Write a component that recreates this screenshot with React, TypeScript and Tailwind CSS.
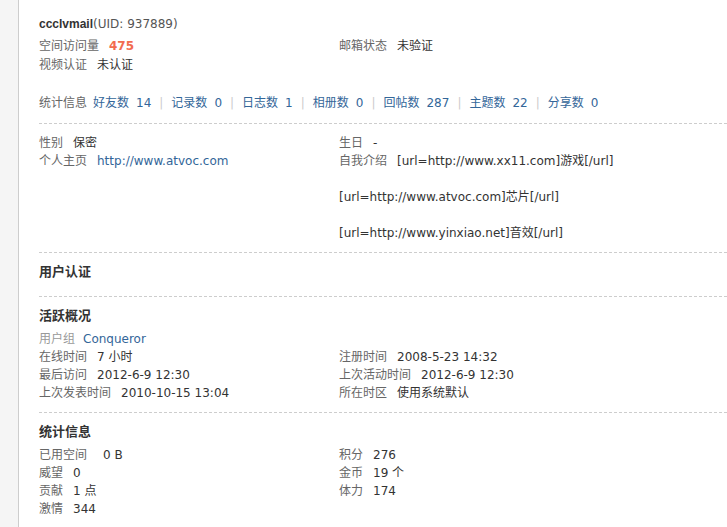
// Member profile page (Discuz-style space profile): basic info, stats links,
// personal info, and activity / credit summaries in two columns.
import React from 'react';

interface Pair {
  label: string;
  value: React.ReactNode;
}

const STATS: { name: string; count: string }[] = [
  { name: '好友数', count: '14' },
  { name: '记录数', count: '0' },
  { name: '日志数', count: '1' },
  { name: '相册数', count: '0' },
  { name: '回帖数', count: '287' },
  { name: '主题数', count: '22' },
  { name: '分享数', count: '0' },
];

const ACTIVITY: [Pair, Pair][] = [
  [
    { label: '在线时间', value: '7 小时' },
    { label: '注册时间', value: '2008-5-23 14:32' },
  ],
  [
    { label: '最后访问', value: '2012-6-9 12:30' },
    { label: '上次活动时间', value: '2012-6-9 12:30' },
  ],
  [
    { label: '上次发表时间', value: '2010-10-15 13:04' },
    { label: '所在时区', value: '使用系统默认' },
  ],
];

const CREDITS: [Pair, Pair | null][] = [
  [
    { label: '已用空间', value: <span className="ml-[6px]">0 B</span> },
    { label: '积分', value: '276' },
  ],
  [
    { label: '威望', value: '0' },
    { label: '金币', value: '19 个' },
  ],
  [
    { label: '贡献', value: '1 点' },
    { label: '体力', value: '174' },
  ],
  [{ label: '激情', value: '344' }, null],
];

function Field({ label, value }: Pair) {
  return (
    <div className="h-[18px] leading-[18px] whitespace-nowrap">
      <span className="mr-[10px] text-[#666]">{label}</span>
      <span className="text-[#333]">{value}</span>
    </div>
  );
}

function TwoCol({ rows }: { rows: [Pair, Pair | null][] }) {
  return (
    <div className="grid grid-cols-[300px_1fr]">
      {rows.map(([left, right], i) => (
        <React.Fragment key={i}>
          <Field {...left} />
          {right ? <Field {...right} /> : <div />}
        </React.Fragment>
      ))}
    </div>
  );
}

function Heading({ children }: { children: React.ReactNode }) {
  return <h2 className="h-[18px] text-[13px] font-bold leading-[18px] text-[#333]">{children}</h2>;
}

export default function App() {
  return (
    <div className="flex h-[527px] w-full overflow-hidden bg-white font-['DejaVu_Sans','Noto_Sans_CJK_SC',sans-serif] text-[12px] text-[#333]">
      <div className="w-[19px] shrink-0 border-r border-[#cdcdcd] bg-[#f5f5f5]" />

      <div className="min-w-0 flex-1 pl-[20px]">
        {/* basic */}
        <div className="pt-[15px] pb-[11px]">
          <div className="h-[18px] leading-[18px] whitespace-nowrap">
            <b className="font-['Liberation_Sans','Noto_Sans_CJK_SC',sans-serif] font-bold text-[#333]">ccclvmail</b>
            <span className="text-[#555]">(UID: 937889)</span>
          </div>
          <div className="mt-[4px] grid grid-cols-[300px_1fr] leading-[19px]">
            <div>
              <span className="mr-[10px] text-[#666]">空间访问量</span>
              <strong className="font-bold text-[#f26c4f]">475</strong>
            </div>
            <div>
              <span className="mr-[10px] text-[#666]">邮箱状态</span>
              <span>未验证</span>
            </div>
            <div>
              <span className="mr-[10px] text-[#666]">视频认证</span>
              <span>未认证</span>
            </div>
          </div>

          <div className="mt-[19px] flex h-[18px] items-center whitespace-nowrap leading-[18px]">
            <span className="mr-[6px] text-[#666]">统计信息</span>
            {STATS.map((s, i) => (
              <React.Fragment key={s.name}>
                {i > 0 && <span className="mx-[8px] text-[#ccc]">|</span>}
                <a href="#" className="text-[#336699]">
                  {s.name}
                  <span className="ml-[7px]">{s.count}</span>
                </a>
              </React.Fragment>
            ))}
          </div>
        </div>

        {/* personal */}
        <div className="grid grid-cols-[300px_1fr] border-t border-dashed border-[#cdcdcd] pt-[10px] pb-[10px]">
          <div>
            <Field label="性别" value="保密" />
            <Field
              label="个人主页"
              value={
                <a href="#" className="text-[#336699]">
                  http://www.atvoc.com
                </a>
              }
            />
          </div>
          <div className="leading-[18px]">
            <Field label="生日" value="-" />
            <div>
              <span className="mr-[10px] text-[#666]">自我介绍</span>
              [url=http://www.xx11.com]游戏[/url]
              <br />
              <br />
              [url=http://www.atvoc.com]芯片[/url]
              <br />
              <br />
              [url=http://www.yinxiao.net]音效[/url]
            </div>
          </div>
        </div>

        {/* verification */}
        <div className="border-t border-dashed border-[#cdcdcd] pt-[10px] pb-[15px]">
          <Heading>用户认证</Heading>
        </div>

        {/* activity */}
        <div className="border-t border-dashed border-[#cdcdcd] pt-[10px] pb-[10px]">
          <Heading>活跃概况</Heading>
          <div className="mt-[5px] h-[18px] leading-[18px]">
            <span className="mr-[8px] text-[#999]">用户组</span>
            <a href="#" className="text-[#336699]">
              Conqueror
            </a>
          </div>
          <TwoCol rows={ACTIVITY} />
        </div>

        {/* credits */}
        <div className="border-t border-dashed border-[#cdcdcd] pt-[10px] pb-[10px]">
          <Heading>统计信息</Heading>
          <div className="mt-[5px]">
            <TwoCol rows={CREDITS} />
          </div>
        </div>
      </div>
    </div>
  );
}
